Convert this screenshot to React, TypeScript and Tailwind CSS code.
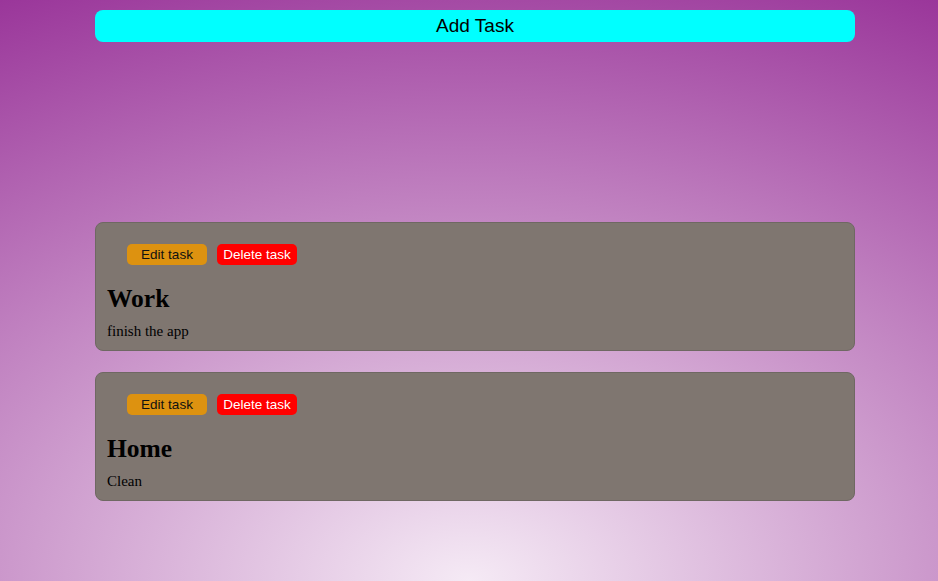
import React from 'react';

type Task = { id: number; title: string; body: string };

const tasks: Task[] = [
  { id: 1, title: 'Work', body: 'finish the app' },
  { id: 2, title: 'Home', body: 'Clean' },
];

function TaskCard({ task }: { task: Task }) {
  return (
    <div className="bg-[#7f7670] border border-[#6f6863] rounded-lg px-[11px] pt-[21px] pb-[10px]">
      <div className="flex gap-[10px] ml-[20px] h-[21px]">
        <button className="w-[80px] h-[21px] rounded-[5px] bg-[#dd9210] text-[13.5px] leading-[21px] text-[#111]">
          Edit task
        </button>
        <button className="w-[80px] h-[21px] rounded-[5px] bg-[#ff0000] text-[13.5px] leading-[21px] text-white">
          Delete task
        </button>
      </div>
      <h2 className="mt-[20px] text-[25.5px] leading-[28px] font-bold text-black font-['Liberation_Serif',serif]">
        {task.title}
      </h2>
      <p className="mt-[9px] text-[15px] leading-[18px] text-black font-['Liberation_Serif',serif]">
        {task.body}
      </p>
    </div>
  );
}

export default function App() {
  return (
    <div className="min-h-screen w-full pt-[10px] font-['Liberation_Sans',Arial,sans-serif] bg-[radial-gradient(ellipse_1020px_654px_at_50%_100%,#f5eaf5_0%,#9a369a_100%)]">
      <div className="w-[760px] ml-[95px]">
        <button className="w-full h-[32px] rounded-lg bg-[#00ffff] text-[19px] text-black">
          Add Task
        </button>

        {/* task list */}
        <div className="mt-[180px] flex flex-col gap-[21px]">
          {tasks.map((t) => (
            <TaskCard key={t.id} task={t} />
          ))}
        </div>
      </div>
    </div>
  );
}
